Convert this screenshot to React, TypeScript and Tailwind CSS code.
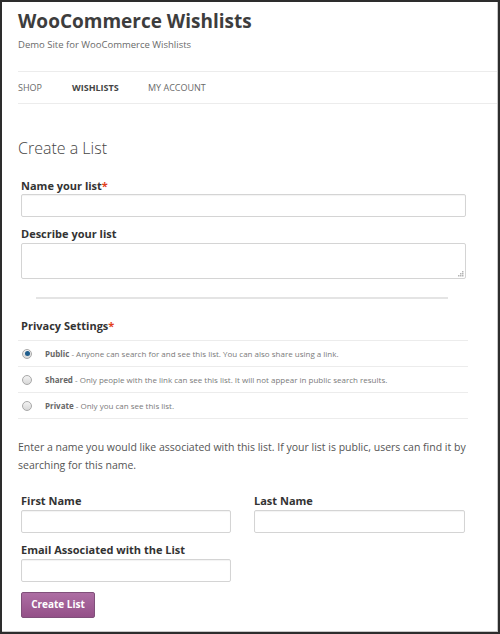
import React from "react";

const font = { fontFamily: '"Open Sans", "Noto Sans", sans-serif' };

function Label({ text, required }: { text: string; required?: boolean }) {
  return (
    <div className="text-[11px] font-bold leading-[14px] text-[#333]">
      {text}
      {required && <span className="text-[#e2401c]">*</span>}
    </div>
  );
}

function Field({ className }: { className?: string }) {
  return (
    <input
      className={
        "block h-[23px] rounded-[2px] border border-[#d4d4d4] bg-white shadow-[inset_0_1px_1px_rgba(0,0,0,0.05)] outline-none " +
        (className || "")
      }
    />
  );
}

function Radio({ checked }: { checked?: boolean }) {
  return (
    <span className="flex h-[10px] w-[10px] items-center justify-center rounded-full border border-[#a8a8a8] bg-gradient-to-b from-[#f3f3f3] to-[#d8d8d8]">
      {checked && <span className="h-[5px] w-[5px] rounded-full bg-[#1f5d8c]" />}
    </span>
  );
}

// dotted resize grip like the old webkit textarea
function Grip() {
  const dots = [
    [6, 0],
    [4, 2],
    [6, 2],
    [2, 4],
    [4, 4],
    [6, 4],
  ];
  return (
    <svg width="8" height="6" className="absolute right-[2px] bottom-[2px]">
      {dots.map(([x, y]) => (
        <rect key={x + "-" + y} x={x} y={y} width="1.5" height="1.5" fill="#b5b5b5" />
      ))}
    </svg>
  );
}

const options = [
  { name: "Public", desc: "Anyone can search for and see this list. You can also share using a link.", checked: true },
  { name: "Shared", desc: "Only people with the link can see this list. It will not appear in public search results." },
  { name: "Private", desc: "Only you can see this list." },
];

export default function App() {
  return (
    <div className="h-[634px] w-[500px] bg-[#2d2d2d] pl-[2px] pt-[2px]" style={font}>
      <div className="h-[630px] w-[496px] border-r border-b border-[#c8c8c8] bg-white">
        <div className="pl-[16px]">
          <h1 className="pt-[5px] text-[19px] font-bold leading-[28px] text-[#3d3d3d]">WooCommerce Wishlists</h1>
          <p className="mt-[3px] text-[9.5px] leading-[14px] text-[#6a6a6a]">Demo Site for WooCommerce Wishlists</p>
          <div className="mt-[19px] border-t border-[#ececec]" />
          <nav className="flex h-[31px] items-center text-[9px] uppercase text-[#6a6a6a]">
            <span className="w-[54px]">Shop</span>
            <span className="w-[76px] font-bold text-[#444]">Wishlists</span>
            <span>My Account</span>
          </nav>
          <div className="border-t border-[#ececec]" />
        </div>

        <div className="pl-[16px] pr-[31px]">
          <h2 className="mt-[33px] text-[16px] leading-[22px] font-light text-[#454545]">Create a List</h2>

          <div className="pl-[3px]">
            <div className="mt-[20px]">
              <Label text="Name your list" required />
              <Field className="mt-[1px] w-[445px]" />
            </div>
            <div className="mt-[10px]">
              <Label text="Describe your list" />
              <div className="relative mt-[2px] w-[445px]">
                <textarea className="block h-[36px] w-full resize-none rounded-[2px] border border-[#d4d4d4] outline-none" />
                <Grip />
              </div>
            </div>
          </div>

          <div className="mx-[18px] mt-[18px] border-t-2 border-[#e4e4e4]" />

          <div className="mt-[20px] pl-[3px]">
            <Label text="Privacy Settings" required />
          </div>
          <div className="mt-[7px] w-[450px] border-t border-[#ececec]">
            {options.map((o) => (
              <div key={o.name} className="flex h-[26px] items-center border-b border-[#ececec] pl-[4px]">
                <Radio checked={o.checked} />
                <span className="ml-[13px] text-[8px] text-[#7a7a7a]">
                  <b className="font-bold text-[#666]">{o.name}</b> - {o.desc}
                </span>
              </div>
            ))}
          </div>

          <p className="mt-[19px] text-[10.5px] leading-[18px] text-[#555]">
            Enter a name you would like associated with this list. If your list is public, users can find it by searching for this name.
          </p>

          <div className="mt-[20px] flex gap-[23px] pl-[3px]">
            <div>
              <Label text="First Name" />
              <Field className="mt-[2px] w-[210px]" />
            </div>
            <div>
              <Label text="Last Name" />
              <Field className="mt-[2px] w-[211px]" />
            </div>
          </div>
          <div className="mt-[10px] pl-[3px]">
            <Label text="Email Associated with the List" />
            <Field className="mt-[2px] w-[210px]" />
          </div>
          <div className="mt-[8px] pl-[3px]">
            <button className="h-[26px] w-[74px] rounded-[2px] border border-[#80507a] bg-gradient-to-b from-[#ad6ea3] to-[#945088] text-[10px] font-bold text-white">
              Create List
            </button>
          </div>
        </div>
      </div>
    </div>
  );
}
